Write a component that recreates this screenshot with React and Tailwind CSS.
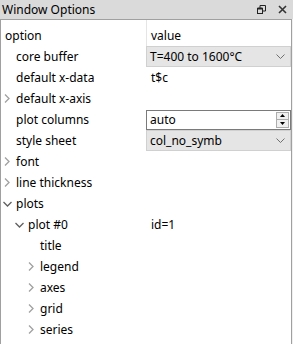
import React from "react";

const font = { fontFamily: '"Noto Sans", "Open Sans", sans-serif' };

function ChevRight({ x }) {
  return (
    <svg width="6" height="9" viewBox="0 0 6 9" className="shrink-0" style={{ marginLeft: x }}>
      <path d="M1 0.5 L5 4.5 L1 8.5" fill="none" stroke="#a0a0a0" strokeWidth="1.3" />
    </svg>
  );
}
function ChevDown({ x }) {
  return (
    <svg width="9" height="6" viewBox="0 0 9 6" className="shrink-0" style={{ marginLeft: x }}>
      <path d="M0.5 1 L4.5 5 L8.5 1" fill="none" stroke="#606060" strokeWidth="1.3" />
    </svg>
  );
}

function Combo({ text }) {
  return (
    <div className="h-[21px] w-[145px] flex items-center justify-between bg-[#e5e5e5] border border-[#d0d0d0] pl-[3px] pr-[5px]">
      <span className="text-[12px] text-black leading-none">{text}</span>
      <svg width="9" height="5" viewBox="0 0 9 5">
        <path d="M0.5 0.5 L4.5 4.5 L8.5 0.5" fill="none" stroke="#707070" strokeWidth="1" />
      </svg>
    </div>
  );
}

function Spin({ text }) {
  return (
    <div className="h-[20px] w-[145px] flex items-center justify-between bg-white border border-[#7a7a7a] pl-[3px] pr-[1px]">
      <span className="text-[12px] text-black leading-none">{text}</span>
      <div className="flex flex-col w-[13px] h-[16px] border border-[#adadad] bg-[#f0f0f0]">
        <div className="flex-1 flex items-center justify-center border-b border-[#adadad]">
          <svg width="5" height="3" viewBox="0 0 5 3"><path d="M0 3 L2.5 0 L5 3Z" fill="#000" /></svg>
        </div>
        <div className="flex-1 flex items-center justify-center">
          <svg width="5" height="3" viewBox="0 0 5 3"><path d="M0 0 L2.5 3 L5 0Z" fill="#000" /></svg>
        </div>
      </div>
    </div>
  );
}

const rows = [
  { label: "core buffer", depth: 0, value: <Combo text="T=400 to 1600°C" /> },
  { label: "default x-data", depth: 0, value: <span className="pl-[5px]">t$c</span> },
  { label: "default x-axis", depth: 0, chev: "right" },
  { label: "plot columns", depth: 0, value: <Spin text="auto" /> },
  { label: "style sheet", depth: 0, value: <Combo text="col_no_symb" /> },
  { label: "font", depth: 0, chev: "right" },
  { label: "line thickness", depth: 0, chev: "right" },
  { label: "plots", depth: 0, chev: "down" },
  { label: "plot #0", depth: 1, chev: "down", value: <span className="pl-[5px]">id=1</span> },
  { label: "title", depth: 2 },
  { label: "legend", depth: 2, chev: "right" },
  { label: "axes", depth: 2, chev: "right" },
  { label: "grid", depth: 2, chev: "right" },
  { label: "series", depth: 2, chev: "right" },
];

export default function App() {
  return (
    <div className="w-[293px] h-[344px] bg-[#f0f0f0] flex flex-col overflow-hidden text-[12px] text-black" style={font}>
      <div className="h-[19px] shrink-0 bg-[#dadada] flex items-center justify-between pl-[2px] pr-[6px]">
        <span className="text-[12px] leading-none">Window Options</span>
        <div className="flex items-center gap-[12px]">
          <svg width="9" height="9" viewBox="0 0 9 9">
            <rect x="0.5" y="3.5" width="5" height="5" fill="none" stroke="#222" strokeWidth="1" />
            <path d="M3 3 V0.5 H8.5 V6 H6" fill="none" stroke="#222" strokeWidth="1" />
            <path d="M0.5 3.5 H5.5" stroke="#222" strokeWidth="2" />
          </svg>
          <svg width="9" height="9" viewBox="0 0 9 9">
            <path d="M1 1 L8 8 M8 1 L1 8" stroke="#333" strokeWidth="1.6" />
          </svg>
        </div>
      </div>
      <div className="w-[292px] flex-1 bg-white border-t border-l border-r border-[#a0a0a0] flex flex-col">
        <div className="h-[26px] flex shrink-0">
          <div className="w-[145px] flex items-center pl-[4px] pt-[5px]">option</div>
          <div className="flex-1 flex items-center pl-[4px] pt-[5px] border-l border-[#e5e5e5]">value</div>
        </div>
        {rows.map((r, i) => {
          const base = 12 * r.depth;
          return (
            <div key={i} className="h-[21px] flex items-center shrink-0">
              <div className="w-[145px] flex items-center h-full">
                {r.chev === "right" && <ChevRight x={base + 3} />}
                {r.chev === "down" && <ChevDown x={base + 2} />}
                <span
                  style={{
                    marginLeft:
                      r.chev === "right" ? 6 : r.chev === "down" ? 4 : base + 15,
                  }}
                >
                  {r.label}
                </span>
              </div>
              <div className="flex-1 flex items-center h-full">{r.value}</div>
            </div>
          );
        })}
      </div>
    </div>
  );
}
